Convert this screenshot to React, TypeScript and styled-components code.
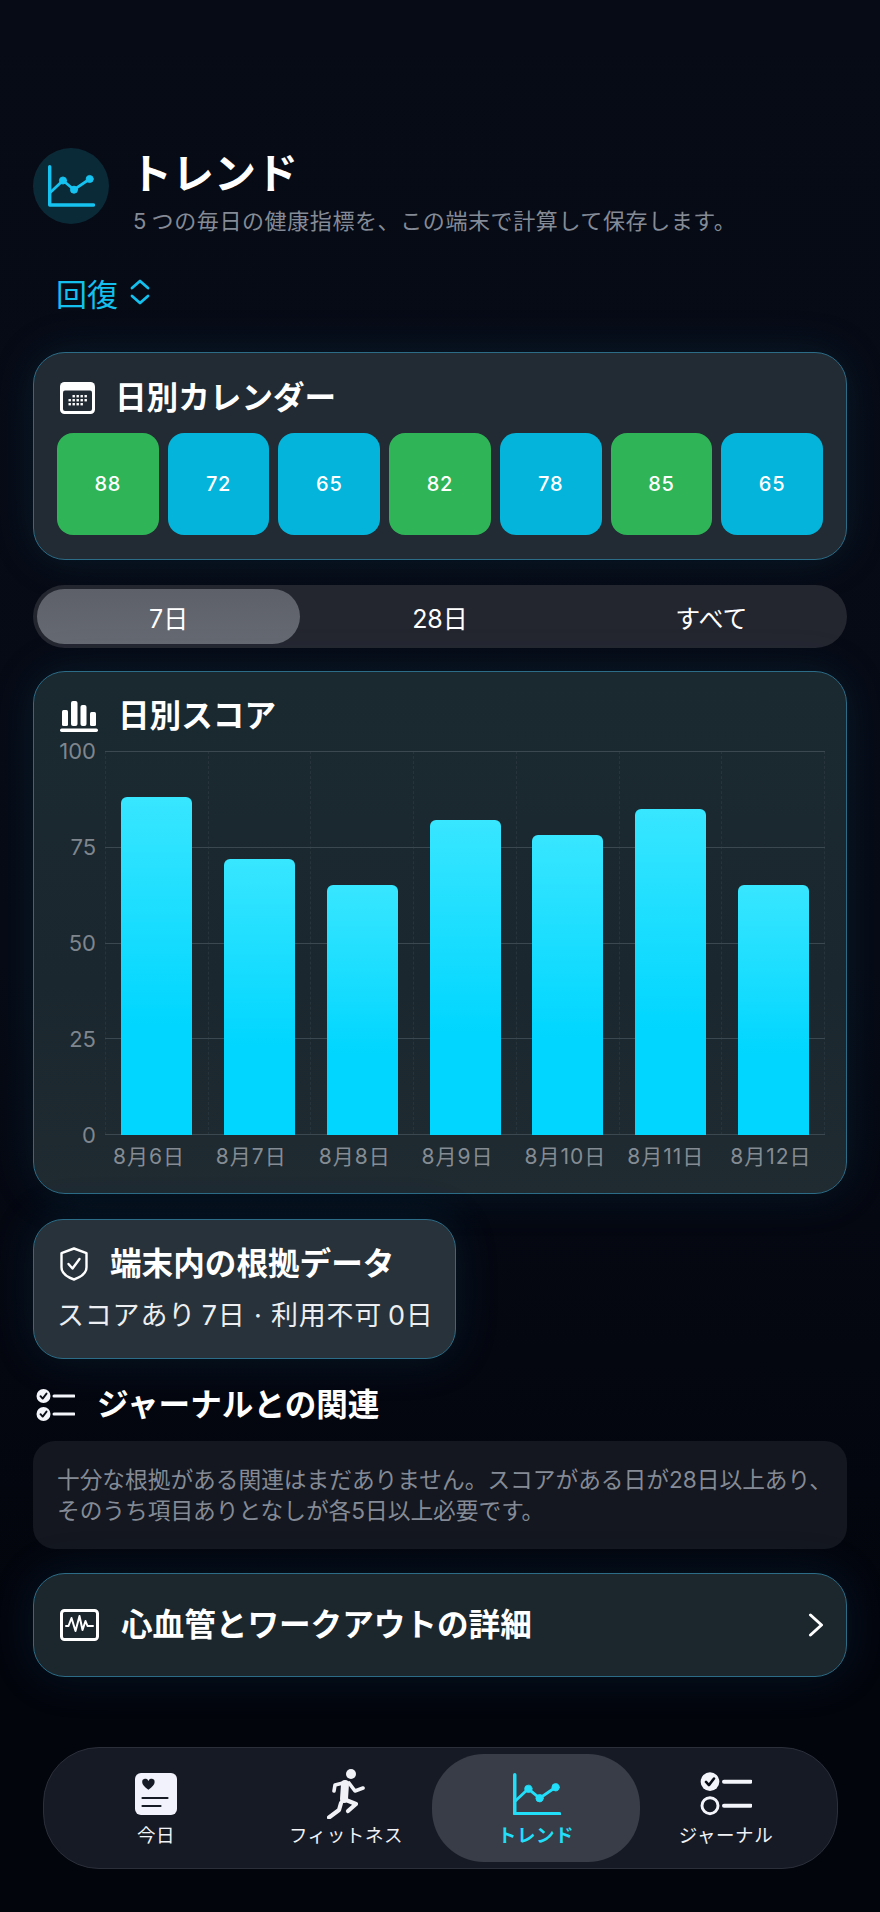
import styled, { createGlobalStyle } from 'styled-components'

const GlobalStyle = createGlobalStyle`
  html, body {
    margin: 0;
    padding: 0;
    background: #050811;
  }
  * {
    box-sizing: border-box;
  }
`

const Page = styled.div`
  width: 880px;
  height: 1912px;
  overflow: hidden;
  padding: 148px 33px 0;
  display: flex;
  flex-direction: column;
  background: linear-gradient(180deg, #070b16 0%, #060a14 50%, #03050d 85%, #03050c 100%);
  color: #fff;
  font-family: Inter, 'Noto Sans CJK JP', sans-serif;
`

const Header = styled.header`
  display: flex;
  align-items: flex-start;
  gap: 24px;
`

const HeaderBadge = styled.div`
  width: 76px;
  height: 76px;
  flex: none;
  border-radius: 50%;
  background: #0b2a38;
  display: flex;
  align-items: center;
  justify-content: center;
`

const HeaderText = styled.div`
  padding-top: 2px;
`

const Title = styled.h1`
  margin: 0 0 0 -3px;
  font-size: 42px;
  line-height: 48px;
  font-weight: 600;
`

const Subtitle = styled.p`
  margin: 9px 0 0;
  font-size: 22px;
  line-height: 28px;
  letter-spacing: 0.6px;
  color: #858b96;
  white-space: nowrap;
`

const Picker = styled.div`
  margin: 37px 0 40px 23px;
  height: 40px;
  display: flex;
  align-items: center;
  gap: 12px;
  font-size: 31px;
  color: #14c0ee;
`

const Card = styled.section<{ $bg: string }>`
  background: ${(p) => p.$bg};
  border: 1.5px solid #2c6c86;
  border-radius: 32px;
  box-shadow: 0 0 44px rgba(18, 88, 130, 0.2);
`

const CalendarCard = styled(Card)`
  padding: 22px 23px 24px;
  height: 208px;
`

const CardHead = styled.div<{ $gap: number }>`
  display: flex;
  align-items: center;
  gap: ${(p) => p.$gap}px;
  height: 46px;
  padding-left: 3px;
`

const CardTitle = styled.h2`
  margin: 0;
  font-size: 31.6px;
  line-height: 40px;
  font-weight: 600;
  white-space: nowrap;
`

const DayGrid = styled.div`
  margin-top: 12px;
  display: grid;
  grid-template-columns: repeat(7, 1fr);
  gap: 9px;
`

const DayCell = styled.div<{ $good: boolean }>`
  height: 102px;
  border-radius: 16px;
  background: ${(p) => (p.$good ? '#2fb457' : '#04b4da')};
  display: flex;
  align-items: center;
  justify-content: center;
  font-size: 20px;
  font-weight: 500;
  letter-spacing: 0.8px;
`

const Segments = styled.div`
  margin-top: 25px;
  height: 63px;
  padding: 4px 0;
  border-radius: 32px;
  background: #24262f;
  display: grid;
  grid-template-columns: repeat(3, 1fr);
`

const Segment = styled.div<{ $active?: boolean }>`
  margin: 0 4px;
  border-radius: 28px;
  display: flex;
  align-items: center;
  justify-content: center;
  font-size: 25px;
  background: ${(p) => (p.$active ? 'linear-gradient(180deg, #5d6069, #666a72)' : 'transparent')};
`

const ChartCard = styled(Card)`
  margin-top: 23px;
  height: 523px;
  padding: 21px 22px 0 23px;
`

const ChartBody = styled.div`
  margin-top: 12px;
  display: grid;
  grid-template-columns: 39px 720px;
  column-gap: 9px;
`

const YAxis = styled.div`
  height: 412px;
  margin: -14px 0;
  display: flex;
  flex-direction: column;
  justify-content: space-between;
  align-items: flex-end;
`

const AxisLabel = styled.span`
  font-size: 22px;
  line-height: 28px;
  color: #7f868e;
`

const Plot = styled.div`
  position: relative;
  height: 384px;
`

const HLines = styled.div`
  position: absolute;
  inset: 0;
  display: flex;
  flex-direction: column;
  justify-content: space-between;
`

const HLine = styled.div`
  height: 1px;
  background: #3b4850;
`

const VLines = styled.div`
  position: absolute;
  inset: 0;
  display: flex;
  justify-content: space-between;
`

const VLine = styled.div`
  width: 0;
  border-left: 1px dashed #27343b;
`

const Bars = styled.div`
  position: absolute;
  inset: 0;
  display: grid;
  grid-template-columns: repeat(7, 1fr);
  align-items: end;
`

const Bar = styled.div<{ $value: number }>`
  width: 71px;
  margin-left: 16px;
  height: ${(p) => p.$value}%;
  border-radius: 6px 6px 0 0;
  background: linear-gradient(180deg, #38e6ff 0%, #00d6ff 68%);
`

const XAxis = styled.div`
  grid-column: 2;
  margin-top: 8px;
  display: grid;
  grid-template-columns: repeat(7, 1fr);
`

const DateLabel = styled.span`
  padding-left: 8px;
  font-size: 21px;
  line-height: 28px;
  letter-spacing: 1px;
  color: #858c93;
  white-space: nowrap;
`

const EvidenceCard = styled(Card)`
  margin-top: 25px;
  width: 423px;
  height: 140px;
  padding: 21px 23px 0;
  border-radius: 30px;
`

const EvidenceText = styled.p`
  margin: 12px 0 0;
  font-size: 27px;
  line-height: 34px;
  letter-spacing: 0.8px;
  color: #eceef1;
  white-space: nowrap;
`

const SectionHead = styled.div`
  margin-top: 26px;
  height: 40px;
  padding-left: 3px;
  display: flex;
  align-items: center;
  gap: 22px;
`

const InfoBox = styled.div`
  margin-top: 16px;
  height: 108px;
  padding: 23px 24px 0;
  border-radius: 22px;
  background: #14171f;
  font-size: 22.7px;
  line-height: 31px;
  color: #858b96;
  white-space: nowrap;
`

const LinkCard = styled(Card)`
  margin-top: 24px;
  height: 104px;
  padding: 0 22px 0 26px;
  display: flex;
  align-items: center;
  gap: 22px;
`

const LinkTitle = styled(CardTitle)`
  flex: 1;
`

const Nav = styled.nav`
  margin: 70px 9px 0 10px;
  height: 122px;
  padding: 6px 17px;
  border-radius: 56px;
  border: 1.5px solid #2b2f3a;
  background: #161a25;
  display: grid;
  grid-template-columns: repeat(4, 190px);
`

const Tab = styled.div<{ $active?: boolean }>`
  margin: 0 -9px;
  border-radius: 52px;
  background: ${(p) => (p.$active ? '#383d47' : 'transparent')};
  color: ${(p) => (p.$active ? '#22def8' : '#f1f2f6')};
  font-weight: ${(p) => (p.$active ? 600 : 400)};
  display: flex;
  flex-direction: column;
  align-items: center;
  padding-top: 14px;
`

const TabIcon = styled.div`
  height: 52px;
  display: flex;
  align-items: center;
  justify-content: center;
`

const TabLabel = styled.span`
  margin-top: 3px;
  font-size: 18.5px;
  line-height: 24px;
  letter-spacing: 0.6px;
  white-space: nowrap;
`

function TrendIcon({ width, color }: { width: number; color: string }) {
  return (
    <svg width={width} height={(width * 42) / 48} viewBox="0 0 48 42" fill="none" stroke={color} strokeLinecap="round" strokeLinejoin="round">
      <path d="M2.700 1.700V40h43.800" strokeWidth="3.400" />
      <path d="M2.700 28L16 15.500l11 9.200L42.700 14" strokeWidth="2.800" />
      <circle cx="16" cy="15.500" r="3.600" fill={color} strokeWidth="0.800" />
      <circle cx="27" cy="24.700" r="3.600" fill={color} strokeWidth="0.800" />
      <circle cx="42.700" cy="14" r="3.600" fill={color} strokeWidth="0.800" />
    </svg>
  )
}

function CalendarIcon() {
  const dots = []
  for (let r = 0; r < 3; r++) {
    for (let c = 0; c < 5; c++) {
      if ((r === 0 && c === 0) || (r === 2 && c === 4)) continue
      dots.push(<rect key={`${r}-${c}`} x={8.5 + c * 4} y={13 + r * 4} width="2.400" height="2.400" fill="#fff" />)
    }
  }
  return (
    <svg width="35" height="32" viewBox="0 0 35 32">
      <rect x="0" y="0" width="35" height="32" rx="4.500" fill="#fff" />
      <rect x="3" y="8.500" width="29" height="20.500" rx="2" fill="#222b33" />
      {dots}
    </svg>
  )
}

function BarsIcon() {
  return (
    <svg width="38" height="32" viewBox="0 0 38 32" fill="#fff">
      <rect x="2" y="10" width="6" height="16" rx="1.500" />
      <rect x="11" y="1" width="6.500" height="25" rx="2" />
      <rect x="20.500" y="5" width="6" height="21" rx="2" />
      <rect x="30" y="12" width="6" height="14" rx="1.500" />
      <rect x="0" y="28.500" width="38" height="3.500" rx="1.700" />
    </svg>
  )
}

function ShieldIcon() {
  return (
    <svg width="28" height="34" viewBox="0 0 28 34" fill="none" stroke="#fff" strokeWidth="2.400" strokeLinecap="round" strokeLinejoin="round">
      <path d="M14 1.500l12.500 4.600v14.200c0 4.600-4.600 9.400-12.500 12.200C6 29.700 1.500 24.900 1.500 20.300V6.100z" />
      <path d="M8.500 17l4 4.500 7-9.500" />
    </svg>
  )
}

function ChecklistIcon({ filledSecond, width }: { filledSecond: boolean; width: number }) {
  return (
    <svg width={width} height={(width * 34) / 39} viewBox="0 0 39 34" fill="none">
      <circle cx="7.500" cy="8" r="7" fill="#f4f5fb" />
      <path d="M4.500 8.200l2.200 2.400 3.800-5" stroke="#0a0d16" strokeWidth="1.900" strokeLinecap="round" strokeLinejoin="round" />
      {filledSecond ? (
        <>
          <circle cx="7.500" cy="26" r="7" fill="#f4f5fb" />
          <path d="M4.500 26.200l2.200 2.400 3.800-5" stroke="#0a0d16" strokeWidth="1.900" strokeLinecap="round" strokeLinejoin="round" />
        </>
      ) : (
        <circle cx="7.500" cy="26" r="6" stroke="#f4f5fb" strokeWidth="2.200" />
      )}
      <path d="M18 8h20M18 26h20" stroke="#f4f5fb" strokeWidth="3" strokeLinecap="round" />
    </svg>
  )
}

function MonitorIcon() {
  return (
    <svg width="39" height="32" viewBox="0 0 39 32" fill="none" stroke="#fff" strokeLinecap="round" strokeLinejoin="round">
      <rect x="1.500" y="1.500" width="36" height="29" rx="3" strokeWidth="3" />
      <path d="M6 17h2.500l3-8 4 13 4-15 3 14 3-9 2 5H33" strokeWidth="2" />
    </svg>
  )
}

function SortIcon() {
  return (
    <svg width="20" height="26" viewBox="0 0 20 26" fill="none" stroke="#14c0ee" strokeWidth="2.800" strokeLinecap="round" strokeLinejoin="round">
      <path d="M2 9l8-7 8 7M2 17l8 7 8-7" />
    </svg>
  )
}

function ChevronIcon() {
  return (
    <svg width="16" height="24" viewBox="0 0 16 24" fill="none" stroke="#fff" strokeWidth="3" strokeLinecap="round" strokeLinejoin="round">
      <path d="M2.500 2l11 10-11 10" />
    </svg>
  )
}

function TodayIcon() {
  return (
    <svg width="42" height="42" viewBox="0 0 42 42">
      <rect width="42" height="42" rx="6" fill="#f1f2fb" />
      <path d="M13.400 16.700C9.500 13.800 7.200 11.500 7.200 9.200a3.200 3.200 0 0 1 6.200-1.300 3.200 3.200 0 0 1 6.200 1.300c0 2.300-2.300 4.600-6.200 7.500z" fill="#161a25" />
      <path d="M7.500 25h25M7.500 33h18" stroke="#161a25" strokeWidth="2.200" strokeLinecap="round" />
    </svg>
  )
}

function RunIcon() {
  return (
    <svg width="38" height="50" viewBox="0 0 38 50" fill="none" stroke="#f1f2f6" strokeLinecap="round" strokeLinejoin="round">
      <circle cx="24" cy="5" r="5" fill="#f1f2f6" stroke="none" />
      <path d="M18 15l-1 15" strokeWidth="8" />
      <path d="M16 14l-8 2-1 6M22 14l6 8 8-3" strokeWidth="3.600" />
      <path d="M19 31l10 4-8 7" strokeWidth="4.200" />
      <path d="M14 34l-2 7-10 7.500" strokeWidth="4.200" />
    </svg>
  )
}

const days = [
  { label: '8月6日', score: 88 },
  { label: '8月7日', score: 72 },
  { label: '8月8日', score: 65 },
  { label: '8月9日', score: 82 },
  { label: '8月10日', score: 78 },
  { label: '8月11日', score: 85 },
  { label: '8月12日', score: 65 },
]

function App() {
  return (
    <Page>
      <GlobalStyle />
      <Header>
        <HeaderBadge>
          <TrendIcon width={48} color="#16c3f0" />
        </HeaderBadge>
        <HeaderText>
          <Title>トレンド</Title>
          <Subtitle>5{'\u2009'}つの毎日の健康指標を、この端末で計算して保存します。</Subtitle>
        </HeaderText>
      </Header>

      <Picker>
        回復
        <SortIcon />
      </Picker>

      <CalendarCard $bg="#222b33">
        <CardHead $gap={20}>
          <CalendarIcon />
          <CardTitle>日別カレンダー</CardTitle>
        </CardHead>
        <DayGrid>
          {days.map((d, i) => (
            <DayCell key={i} $good={d.score >= 80}>{d.score}</DayCell>
          ))}
        </DayGrid>
      </CalendarCard>

      <Segments>
        <Segment $active>7日</Segment>
        <Segment>28日</Segment>
        <Segment>すべて</Segment>
      </Segments>

      <ChartCard $bg="linear-gradient(180deg, #1a2930 0%, #1b272e 60%, #1f2a31 100%)">
        <CardHead $gap={20}>
          <BarsIcon />
          <CardTitle>日別スコア</CardTitle>
        </CardHead>
        <ChartBody>
          <YAxis>
            {[100, 75, 50, 25, 0].map((v) => (
              <AxisLabel key={v}>{v}</AxisLabel>
            ))}
          </YAxis>
          <Plot>
            <VLines>
              {Array.from({ length: 8 }).map((_, i) => (
                <VLine key={i} />
              ))}
            </VLines>
            <HLines>
              {[0, 1, 2, 3, 4].map((i) => (
                <HLine key={i} />
              ))}
            </HLines>
            <Bars>
              {days.map((d, i) => (
                <Bar key={i} $value={d.score} />
              ))}
            </Bars>
          </Plot>
          <XAxis>
            {days.map((d, i) => (
              <DateLabel key={i}>{d.label}</DateLabel>
            ))}
          </XAxis>
        </ChartBody>
      </ChartCard>

      <EvidenceCard $bg="#27323a">
        <CardHead $gap={22}>
          <ShieldIcon />
          <CardTitle>端末内の根拠データ</CardTitle>
        </CardHead>
        <EvidenceText>スコアあり{'\u2009'}7日 · 利用不可{'\u2009'}0日</EvidenceText>
      </EvidenceCard>

      <SectionHead>
        <ChecklistIcon filledSecond width={39} />
        <CardTitle>ジャーナルとの関連</CardTitle>
      </SectionHead>

      <InfoBox>
        十分な根拠がある関連はまだありません。スコアがある日が28日以上あり、
        <br />
        そのうち項目ありとなしが各5日以上必要です。
      </InfoBox>

      <LinkCard $bg="#1b262d">
        <MonitorIcon />
        <LinkTitle>心血管とワークアウトの詳細</LinkTitle>
        <ChevronIcon />
      </LinkCard>

      <Nav>
        <Tab>
          <TabIcon><TodayIcon /></TabIcon>
          <TabLabel>今日</TabLabel>
        </Tab>
        <Tab>
          <TabIcon><RunIcon /></TabIcon>
          <TabLabel>フィットネス</TabLabel>
        </Tab>
        <Tab $active>
          <TabIcon><TrendIcon width={49} color="#22def8" /></TabIcon>
          <TabLabel>トレンド</TabLabel>
        </Tab>
        <Tab>
          <TabIcon><ChecklistIcon filledSecond={false} width={52} /></TabIcon>
          <TabLabel>ジャーナル</TabLabel>
        </Tab>
      </Nav>
    </Page>
  )
}

export default App
